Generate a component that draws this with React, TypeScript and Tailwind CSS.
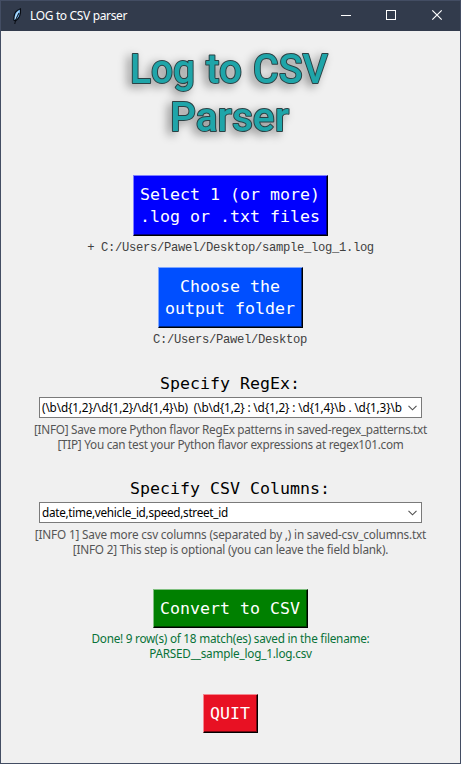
import type { ReactNode } from "react";

const mono = "font-['DejaVu_Sans_Mono',monospace]";
const ui = "font-['Noto_Sans','Open_Sans',sans-serif]";

function TkButton({ className, children }: { className: string; children: ReactNode }) {
  return (
    <button
      className={`${mono} flex shrink-0 items-center justify-center whitespace-pre border border-b-black border-r-black pr-px pt-px text-center text-[16.6px] leading-[22px] text-white shadow-[inset_-1px_-1px_0_rgba(0,0,0,0.5)] ${className}`}
    >
      {children}
    </button>
  );
}

function PathLabel({ className, children }: { className: string; children: ReactNode }) {
  return (
    <div
      className={`h-[15px] shrink-0 whitespace-pre font-['Liberation_Mono',monospace] text-[12.2px] leading-[15px] tracking-[-0.32px] text-[#404040] ${className}`}
    >
      {children}
    </div>
  );
}

function Heading({ className, children }: { className: string; children: ReactNode }) {
  return (
    <div className={`${mono} h-[22px] shrink-0 whitespace-pre pr-px text-[16.6px] leading-[22px] text-black ${className}`}>
      {children}
    </div>
  );
}

function Combo({ children, textClass }: { children: ReactNode; textClass: string }) {
  return (
    <div className="mt-[2px] flex h-[21px] w-[383px] shrink-0 items-center justify-between border border-[#7a7a7a] bg-white pl-[2px] pr-1">
      <span className={`${ui} whitespace-pre text-[11.75px] leading-[19px] text-black ${textClass}`}>{children}</span>
      <svg className="shrink-0" width="9" height="6" viewBox="0 0 9 6" fill="none" stroke="#505050" strokeWidth="1.1">
        <path d="M.5 .8 4.5 4.8 8.5 .8" />
      </svg>
    </div>
  );
}

function Line({ className, children }: { className: string; children: ReactNode }) {
  return <div className={`${ui} h-[15px] whitespace-pre text-[11.75px] leading-[15px] ${className}`}>{children}</div>;
}

function Feather() {
  return (
    <svg width="10" height="17" viewBox="0 0 10 17" className="ml-[11px]">
      <path d="M8.5 .8C5 2 2.2 5 2 9L1.8 12.2 3.8 12.8C7 10.5 9 6 8.5 .8Z" fill="#70b4ee" stroke="#080b12" strokeWidth="1.1" />
      <path d="M6.7 3.3C4.8 5.2 3.6 8.2 3.3 11" fill="none" stroke="#d4efff" strokeWidth="1" />
      <path d="M7 5 3.5 12 2.8 16" fill="none" stroke="#080b12" strokeWidth="1" />
    </svg>
  );
}

function Logo() {
  return (
    <svg
      width="250"
      height="120"
      viewBox="0 0 250 120"
      className="shrink-0 font-['Roboto',sans-serif] drop-shadow-[-4px_3px_5px_rgba(0,0,0,0.4)]"
      fontSize="40.5"
      fontWeight="500"
      fill="#1fa5a9"
      stroke="#2c4144"
      strokeWidth="2"
      strokeLinejoin="round"
      paintOrder="stroke"
    >
      <text x="24" y="52" textLength="65" lengthAdjust="spacingAndGlyphs">Log</text>
      <text x="100" y="52" textLength="36" lengthAdjust="spacingAndGlyphs">to</text>
      <text x="147" y="52" textLength="75" lengthAdjust="spacingAndGlyphs">CSV</text>
      <text x="64" y="100" textLength="119" lengthAdjust="spacingAndGlyphs">Parser</text>
    </svg>
  );
}

export default function App() {
  return (
    <div className="flex h-[764px] w-[461px] flex-col overflow-hidden border border-[#434d63] bg-[#f0f0f0]">
      <header className="flex h-[30px] shrink-0 items-center bg-[#323b4c]">
        <Feather />
        <span className={`${ui} ml-2 whitespace-pre text-[12px] tracking-[-0.35px] text-white`}>LOG to CSV parser</span>
        <svg width="104" height="12" viewBox="0 0 104 12" className="relative -top-px ml-auto mr-4" fill="none" stroke="#fff">
          <path d="M1 6.5H11" />
          <rect x="46.5" y="1.5" width="9" height="9" />
          <path d="M92.3 1.3 101.7 10.7M101.7 1.3 92.3 10.7" strokeWidth="1.2" />
        </svg>
      </header>
      <main className="flex flex-col items-center">
        <Logo />
        <TkButton className="mt-[24px] h-[61px] w-[195px] border-l-[#8080ff] border-t-[#8080ff] bg-[#0000ff]">
          {"Select 1 (or more)\n.log or .txt files"}
        </TkButton>
        <PathLabel className="mt-[5px]">+ C:/Users/Pawel/Desktop/sample_log_1.log</PathLabel>
        <TkButton className="mt-[11px] h-[61px] w-[145px] border-l-[#80a7ff] border-t-[#80a7ff] bg-[#004fff]">
          {"Choose the\noutput folder"}
        </TkButton>
        <PathLabel className="mt-[5px] pr-px">C:/Users/Pawel/Desktop</PathLabel>
        <Heading className="mt-[25px]">Specify RegEx:</Heading>
        <Combo textClass="tracking-[-0.15px]">{"(\\b\\d{1,2}/\\d{1,2}/\\d{1,4}\\b)  (\\b\\d{1,2} : \\d{1,2} : \\d{1,4}\\b . \\d{1,3}\\b"}</Combo>
        <div className="mt-[4px] flex flex-col items-center text-[#555]">
          <Line className="tracking-[-0.28px]">[INFO] Save more Python flavor RegEx patterns in saved-regex_patterns.txt</Line>
          <Line className="tracking-[-0.27px]">[TIP] You can test your Python flavor expressions at regex101.com</Line>
        </div>
        <Heading className="mt-[26px]">Specify CSV Columns:</Heading>
        <Combo textClass="tracking-[-0.3px]">date,time,vehicle_id,speed,street_id</Combo>
        <div className="mt-[4px] flex flex-col items-center text-[#555]">
          <Line className="tracking-[-0.18px]">[INFO 1] Save more csv columns (separated by ,) in saved-csv_columns.txt</Line>
          <Line className="tracking-[-0.2px]">[INFO 2] This step is optional (you can leave the field blank).</Line>
        </div>
        <TkButton className="mt-[32px] h-[39px] w-[155px] border-l-[#80c080] border-t-[#80c080] bg-[#008000]">
          Convert to CSV
        </TkButton>
        <div className="mt-[3px] flex flex-col items-center text-[#087238]">
          <Line className="tracking-[-0.24px]">Done! 9 row(s) of 18 match(es) saved in the filename:</Line>
          <Line className="tracking-[-0.22px]">PARSED__sample_log_1.log.csv</Line>
        </div>
        <TkButton className="mt-[33px] h-[39px] w-[55px] border-l-[#f48890] border-t-[#f48890] bg-[#e81123]">
          QUIT
        </TkButton>
      </main>
    </div>
  );
}
